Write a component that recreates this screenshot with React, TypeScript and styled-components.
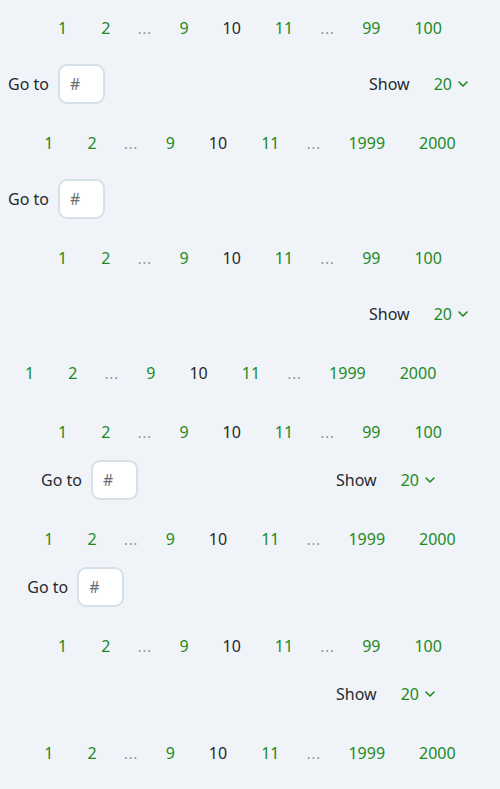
import React from 'react';
import styled, { createGlobalStyle } from 'styled-components';

const GlobalStyle = createGlobalStyle`
  html, body {
    background: #f0f4f8;
  }

  body {
    margin: 8px;
    font-family: 'Noto Sans', 'Open Sans', sans-serif;
    font-size: 16px;
    color: #262a2e;
  }
`;

type Align = 'full' | 'center' | 'start';

interface PagerProps {
  align: Align;
  last: number;
  showGoTo?: boolean;
  showSize?: boolean;
}

const Stack = styled.div`
  display: flex;
  flex-direction: column;
  gap: 19px;
`;

const Block = styled.div<{ $align: Align }>`
  display: flex;
  flex-direction: column;
  gap: ${({ $align }) => ($align === 'full' ? '16px' : '8px')};
  width: ${({ $align }) => ($align === 'full' ? 'auto' : 'fit-content')};
  align-self: ${({ $align }) => ($align === 'start' ? 'flex-start' : $align === 'center' ? 'center' : 'stretch')};
`;

const Pages = styled.nav`
  display: flex;
  justify-content: center;
  height: 40px;
`;

const PageButton = styled.button<{ $current?: boolean }>`
  height: 40px;
  padding: 0 17px;
  border: none;
  background: transparent;
  font: inherit;
  color: ${({ $current }) => ($current ? '#262a2e' : '#1c8a1f')};
  cursor: pointer;
`;

const Ellipsis = styled.span`
  display: flex;
  align-items: center;
  justify-content: center;
  width: 35px;
  height: 40px;
  color: #8a9096;
  font-size: 14px;
  letter-spacing: 1px;
`;

const Controls = styled.div<{ $only?: 'goto' | 'size' }>`
  display: flex;
  align-items: center;
  justify-content: ${({ $only }) => ($only === 'size' ? 'flex-end' : $only === 'goto' ? 'flex-start' : 'space-between')};
  height: 40px;
`;

const GoTo = styled.label`
  display: flex;
  align-items: center;
  gap: 9px;
`;

const GoToInput = styled.input`
  box-sizing: border-box;
  width: 47px;
  height: 40px;
  padding: 0 10px;
  border: 2px solid #d6e0e8;
  border-radius: 9px;
  background: #ffffff;
  font: inherit;
  color: #262a2e;
  outline: none;

  &::placeholder {
    color: #6b6f73;
  }
`;

const SizeGroup = styled.div`
  display: flex;
  align-items: center;
  gap: 24px;
  padding-right: 24px;
`;

const SizeSelect = styled.button`
  display: flex;
  align-items: center;
  gap: 6px;
  padding: 0;
  border: none;
  background: transparent;
  font: inherit;
  color: #1c8a1f;
  cursor: pointer;
`;

const Chevron = () => (
  <svg width="10" height="6" viewBox="0 0 10 6" fill="none">
    <path d="M1 1l4 4 4-4" stroke="#1c8a1f" strokeWidth="1.6" strokeLinecap="round" strokeLinejoin="round" />
  </svg>
);

const Pager: React.FC<PagerProps> = ({ align, last, showGoTo, showSize }) => {
  const only = showGoTo && showSize ? undefined : showGoTo ? 'goto' : 'size';

  return (
    <Block $align={align}>
      <Pages>
        <PageButton>1</PageButton>
        <PageButton>2</PageButton>
        <Ellipsis>...</Ellipsis>
        <PageButton>9</PageButton>
        <PageButton $current>10</PageButton>
        <PageButton>11</PageButton>
        <Ellipsis>...</Ellipsis>
        <PageButton>{last - 1}</PageButton>
        <PageButton>{last}</PageButton>
      </Pages>
      {(showGoTo || showSize) && (
        <Controls $only={only}>
          {showGoTo && (
            <GoTo>
              Go to
              <GoToInput placeholder='#' />
            </GoTo>
          )}
          {showSize && (
            <SizeGroup>
              <span>Show</span>
              <SizeSelect>
                20
                <Chevron />
              </SizeSelect>
            </SizeGroup>
          )}
        </Controls>
      )}
    </Block>
  );
};

const App: React.FC = () => (
  <>
    <GlobalStyle />
    <Stack>
      <Pager align='full' last={100} showGoTo showSize />
      <Pager align='full' last={2000} showGoTo />
      <Pager align='full' last={100} showSize />
      <Pager align='start' last={2000} />
      <Pager align='center' last={100} showGoTo showSize />
      <Pager align='center' last={2000} showGoTo />
      <Pager align='center' last={100} showSize />
      <Pager align='center' last={2000} />
    </Stack>
  </>
);

export default App;
